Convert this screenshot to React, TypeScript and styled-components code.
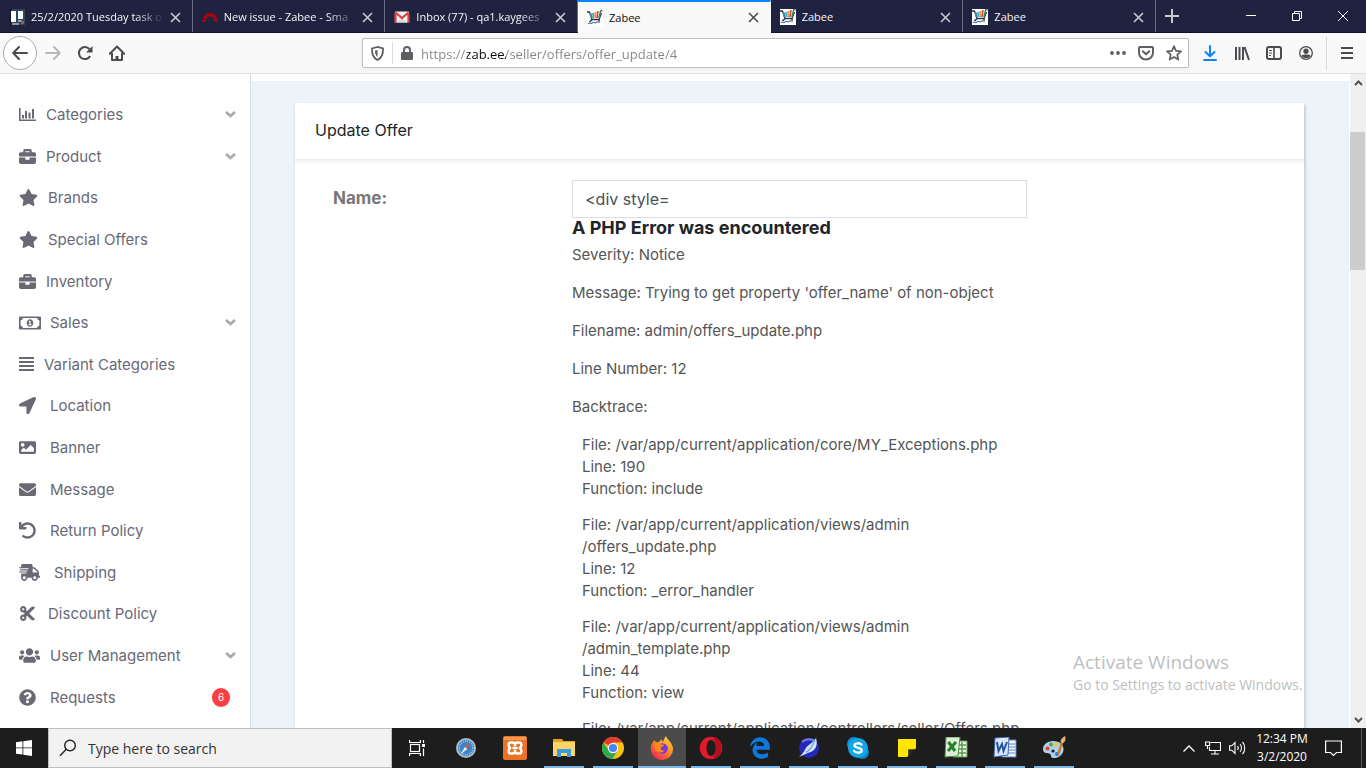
import React from "react";
import styled, { createGlobalStyle, css } from "styled-components";
import {
  FaBriefcase,
  FaCut,
  FaEnvelope,
  FaImage,
  FaLocationArrow,
  FaQuestionCircle,
  FaRegMoneyBillAlt,
  FaShippingFast,
  FaStar,
  FaUndo,
  FaUsers,
  FaEdgeLegacy,
} from "react-icons/fa";

const chromeFont = `"Open Sans", "Noto Sans", sans-serif`;
const pageFont = `Inter, "Open Sans", sans-serif`;

const GlobalStyle = createGlobalStyle`
  * { box-sizing: border-box; }
  body { margin: 0; background: #fff; overflow: hidden; }
  button, input { font: inherit; color: inherit; margin: 0; }
  button { border: 0; padding: 0; background: none; cursor: pointer; }
  a { color: inherit; text-decoration: none; }
  svg { display: block; flex: none; }
`;

const Screen = styled.div`
  display: flex;
  flex-direction: column;
  height: 100vh;
  overflow: hidden;
  font-family: ${chromeFont};
`;

/* ---------- browser chrome ---------- */

const TabStrip = styled.header`
  display: flex;
  flex: none;
  height: 33px;
  background: #20233f;
  border-bottom: 1px solid #10122a;
  color: #f4f4f8;
`;

const Tabs = styled.div`
  display: flex;
  flex: 1;
  max-width: 1156px;
  min-width: 0;
`;

const Tab = styled.div<{ $active?: boolean }>`
  display: flex;
  flex: 1 1 0;
  min-width: 0;
  align-items: center;
  gap: 6px;
  padding: 2px 11px 0 9px;
  font-size: 11px;
  border-right: 1px solid #6b6d80;
  ${(p) =>
    p.$active &&
    css`
      height: 33px;
      padding-top: 0;
      color: #0c0c0d;
      background: #f9f9fa;
      border-top: 2px solid #0a84ff;
      border-right-color: #f9f9fa;
    `}
`;

const TabTitle = styled.span<{ $fade?: boolean }>`
  flex: 1;
  min-width: 0;
  overflow: hidden;
  white-space: nowrap;
  line-height: 18px;
  ${(p) => p.$fade && `mask-image: linear-gradient(to right, #000 78%, transparent);`}
`;

const IconButton = styled.button<{ $w: number }>`
  display: flex;
  flex: none;
  align-items: center;
  justify-content: center;
  width: ${(p) => p.$w}px;
  height: 100%;
`;

const WindowButtons = styled.div`
  display: flex;
  margin-left: auto;
`;

const Toolbar = styled.div`
  display: flex;
  flex: none;
  align-items: center;
  height: 41px;
  padding: 0 0 0 3px;
  background: #f9f9fa;
  border-bottom: 1px solid #e0e0e1;
  color: #4a4a4f;
`;

const BackButton = styled.button`
  display: grid;
  place-items: center;
  width: 34px;
  height: 34px;
  border: 1px solid #aaaaab;
  border-radius: 50%;
  background: #fff;
`;

const UrlBar = styled.div`
  display: flex;
  flex: 1;
  align-items: center;
  height: 30px;
  min-width: 0;
  margin: 0 5px 0 229px;
  padding: 0 4px 0 8px;
  gap: 8px;
  border: 1px solid #bebebf;
  border-radius: 2px;
  background: #fff;
  box-shadow: 0 1px 4px rgba(0, 0, 0, 0.06);
  color: #5f5f63;
`;

const UrlInput = styled.input`
  flex: 1;
  min-width: 0;
  height: 24px;
  padding: 2px 0 0;
  border: 0;
  outline: 0;
  font-size: 13px;
  color: transparent;
  background: linear-gradient(to right, #858588 46px, #0c0c0d 46px, #0c0c0d 85px, #858588 85px);
  background-clip: text;
  -webkit-background-clip: text;
`;

const Rule = styled.span<{ $h: number; $color: string }>`
  flex: none;
  width: 1px;
  height: ${(p) => p.$h}px;
  background: ${(p) => p.$color};
`;

const ToolbarEnd = styled.div`
  display: flex;
  align-items: center;
  height: 100%;
  margin-left: 4px;
`;

/* ---------- web page ---------- */

const Viewport = styled.div`
  position: relative;
  display: flex;
  flex: 1;
  min-height: 0;
  overflow: hidden;
  background: #fff;
  font-family: ${pageFont};
`;

const Sidebar = styled.nav`
  flex: none;
  width: 251px;
  border-right: 1px solid #d9dce0;
  color: #686975;
  font-size: 15px;
`;

const MenuList = styled.ul`
  display: flex;
  flex-direction: column;
  height: 100%;
  margin: 0;
  padding: 20px 0 10px;
  list-style: none;
`;

const MenuItem = styled.li`
  flex: 1;
  min-height: 0;
`;

const MenuLink = styled.a<{ $gap: number }>`
  display: flex;
  align-items: center;
  height: 100%;
  padding: 0 14px 0 19px;
  gap: ${(p) => p.$gap}px;
  white-space: nowrap;
`;

const Chevron = styled.span`
  margin-left: auto;
  color: #a9abb0;
`;

const Badge = styled.span`
  display: grid;
  place-items: center;
  width: 18px;
  height: 19px;
  margin-left: auto;
  margin-right: 6px;
  border-radius: 10px;
  background: #fb3f42;
  color: #fff;
  font-size: 10px;
`;

const Main = styled.main`
  flex: 1;
  min-width: 0;
  margin-right: 1px;
  padding: 22px 45px 0 44px;
  border-top: 7px solid #fff;
  background: #ecf4f8;
`;

const Card = styled.section`
  min-height: 100%;
  background: #fff;
  box-shadow: 1px 2px 3px rgba(60, 80, 100, 0.3);
`;

const CardHeader = styled.h1`
  margin: 0;
  padding: 15px 20px 17px;
  border-bottom: 1px solid #ececec;
  box-shadow: 0 2px 3px rgba(0, 0, 0, 0.06);
  color: #212529;
  font-size: 16px;
  font-weight: 400;
  line-height: 24px;
`;

const FormRow = styled.div`
  display: grid;
  grid-template-columns: 239px minmax(0, 455px);
  padding: 20px 38px 0;
`;

const FieldLabel = styled.label`
  color: #777;
  font-size: 17px;
  font-weight: 700;
  line-height: 36px;
`;

const TextField = styled.input`
  display: block;
  width: 100%;
  height: 38px;
  padding: 0 12px;
  border: 1px solid #dcdde3;
  outline: 0;
  background: #fff;
  color: #495057;
  font-size: 16px;
`;

const ErrorTitle = styled.h4`
  margin: 0 0 6px;
  color: #212529;
  font-size: 18px;
  font-weight: 700;
  line-height: 20px;
`;

const Line = styled.p`
  margin: 0 0 16px;
  color: #555;
  font-size: 15px;
  line-height: 22px;
  white-space: nowrap;
`;

const TraceEntry = styled(Line)`
  margin: 0 0 14px 10px;
`;

const Scrollbar = styled.div`
  display: flex;
  flex: none;
  flex-direction: column;
  align-items: center;
  width: 16px;
  padding: 6px 0 5px;
  background: #f0f0f0;
  color: #505050;
`;

const Thumb = styled.div`
  width: 100%;
  height: 138px;
  margin: 46px 0 auto;
  border-right: 1px solid #f0f0f0;
  background: #cdcdcd;
`;

const Watermark = styled.div`
  position: absolute;
  right: 57px;
  bottom: 33px;
  width: 236px;
  color: #bdbfc0;
  font-family: ${chromeFont};
  font-size: 14px;
  line-height: 20px;
  white-space: nowrap;
`;

const WatermarkTitle = styled.div`
  font-size: 19px;
  line-height: 26px;
`;

/* ---------- task bar ---------- */

const Taskbar = styled.footer`
  display: flex;
  flex: none;
  height: 40px;
  background: #1d1d1d;
  color: #fff;
`;

const SearchBox = styled.label`
  display: flex;
  flex: none;
  align-items: center;
  gap: 11px;
  width: 344px;
  padding: 0 10px;
  border: 1px solid #bfbfbf;
  background: #f2f2f2;
  color: #222;
`;

const SearchInput = styled.input`
  flex: 1;
  min-width: 0;
  padding: 0;
  border: 0;
  outline: 0;
  background: none;
  font-size: 14px;
  &::placeholder {
    color: #333;
    opacity: 1;
  }
`;

const Apps = styled.div`
  display: flex;
  flex: none;
  gap: 1px;
  padding-left: 1px;
`;

const AppButton = styled.button<{ $running?: boolean; $active?: boolean }>`
  display: grid;
  place-items: center;
  width: 48px;
  background: ${(p) => (p.$active ? "#4b4b4b" : "transparent")};
  ${(p) =>
    p.$running &&
    css`
      background-image: linear-gradient(#76b9ed, #76b9ed);
      background-repeat: no-repeat;
      background-position: center bottom;
      background-size: ${p.$active ? "48px" : "40px"} 2px;
    `}
`;

const Tray = styled.div`
  display: flex;
  align-items: center;
  margin-left: auto;
  padding-right: 4px;
`;

const Clock = styled.time`
  width: 66px;
  font-size: 12px;
  line-height: 18px;
  text-align: center;
`;

const TrayEnd = styled.div`
  display: flex;
  gap: 10px;
  height: 100%;
`;

/* ---------- drawings ---------- */

const CloseGlyph = ({ color = "#c9c9d2" }: { color?: string }) => (
  <svg width="11" height="11" viewBox="0 0 11 11" stroke={color} strokeWidth="1.6">
    <path d="M1 1l9 9M10 1l-9 9" />
  </svg>
);

const ZabeeIcon = () => (
  <svg width="16" height="16" viewBox="0 0 16 16" fill="none">
    <rect width="16" height="16" fill="#fff" />
    <path d="M0 2h2.500l2.500 7.500h7L14.500 3" stroke="#26384f" strokeWidth="1.300" />
    <path d="M3.500 3.500L4.800 8" stroke="#4a7fc0" strokeWidth="2" />
    <path d="M6 3l.4 5" stroke="#2cb5c9" strokeWidth="1.800" />
    <path d="M8.200 2v6" stroke="#f0a02c" strokeWidth="1.800" />
    <path d="M10.800 1l-.7 7" stroke="#e8453c" strokeWidth="1.800" />
    <path d="M15.500.8h-1.800l-1.800 7" stroke="#3c8b6c" strokeWidth="1.500" />
    <path d="M5 9.500L2.500 12M11.500 9.500l1 2" stroke="#26384f" strokeWidth="1.500" />
    <path d="M1 14c2-2.500 2 1 4-1s2 1 4-.5 2 .5 4-.5" stroke="#5d7ca4" strokeWidth="1.200" />
  </svg>
);

const BoardIcon = () => (
  <svg width="16" height="16" viewBox="0 0 16 16">
    <rect width="16" height="16" fill="#33475a" />
    <path d="M0 0h3v16H0z" fill="#15202c" />
    <rect x="2" y="2" width="5" height="11" fill="#fff" />
    <rect x="9" y="2" width="5" height="8" fill="#f5f8fa" />
    <path d="M9 11h4v2H9z" fill="#8ca2b6" />
    <path d="M12 12h3v3h-3z" fill="#a5583f" />
    <path d="M3 14h7v2H3z" fill="#8a97a4" />
  </svg>
);

const RedmineIcon = () => (
  <svg width="16" height="16" viewBox="0 0 16 16" fill="none">
    <path d="M2 13A6 7.500 0 0 1 14 13" stroke="#b3020c" strokeWidth="3.500" strokeDasharray="2.800 .7" />
  </svg>
);

const GmailIcon = () => (
  <svg width="16" height="16" viewBox="0 0 16 16">
    <rect x="1" y="2.500" width="14" height="11" rx="1" fill="#f2f2f2" />
    <path d="M3 13.500l5-5 5 5z" fill="#dcdcdc" />
    <path d="M1.500 4v9.500M14.500 4v9.500M1.500 3.500L8 9l6.500-5.500" fill="none" stroke="#d9453a" strokeWidth="2.200" />
  </svg>
);

const BarsIcon = () => (
  <svg width="17" height="13" viewBox="0 0 17 13" fill="none" stroke="currentColor">
    <path d="M.8 0v12.200H17" strokeWidth="1.600" />
    <path d="M4 7v3.500M7 3v7.500M10.500 4.500v6M14 1v9.500" strokeWidth="2" />
  </svg>
);

const LinesIcon = () => (
  <svg width="15" height="14" viewBox="0 0 15 14" fill="none" stroke="currentColor" strokeWidth="2">
    <path d="M0 1h15M0 5h15M0 9h15M0 13h15" />
  </svg>
);

const DownGlyph = () => (
  <svg width="11" height="7" viewBox="0 0 11 7" fill="none" stroke="currentColor" strokeWidth="2.800">
    <path d="M1 1l4.500 4L10 1" />
  </svg>
);

const ScrollGlyph = ({ up }: { up?: boolean }) => (
  <svg width="9" height="6" viewBox="0 0 9 6" fill="none" stroke="currentColor" strokeWidth="2">
    <path d={up ? "M1 5l3.500-3.500L8 5" : "M1 1l3.500 3.500L8 1"} />
  </svg>
);

const stroke = { fill: "none", stroke: "currentColor", strokeWidth: 2 } as const;

const BackIcon = () => (
  <svg width="16" height="16" viewBox="0 0 16 16" {...stroke} strokeLinecap="round" strokeLinejoin="round">
    <path d="M15 8H1.500M7 2L1.200 8 7 14" />
  </svg>
);
const ForwardIcon = () => (
  <svg width="16" height="16" viewBox="0 0 16 16" {...stroke} stroke="#b9b9bb" strokeLinecap="round" strokeLinejoin="round">
    <path d="M1 8h13.500M9 2l5.800 6L9 14" />
  </svg>
);
const ReloadIcon = () => (
  <svg width="16" height="16" viewBox="0 0 16 16" {...stroke}>
    <path d="M13.200 11A6 6 0 1 1 12.500 4.200" />
    <path d="M15.500 1v6.500H9z" fill="currentColor" stroke="none" />
  </svg>
);
const HomeIcon = () => (
  <svg width="16" height="16" viewBox="0 0 16 16" {...stroke} strokeLinejoin="round">
    <path d="M.8 8.800L8 1.500l7.200 7.300" strokeLinecap="round" />
    <path d="M3 8v7h10V8" />
    <path d="M8 15v-4" strokeWidth="3" />
  </svg>
);
const ShieldIcon = () => (
  <svg width="13" height="15" viewBox="0 0 13 15" {...stroke}>
    <path d="M1 2.500L6.500 1 12 2.500c0 5-.5 9-5.500 11.500C1.500 11.500 1 7.500 1 2.500z" strokeWidth="1.800" />
    <path d="M6.500 4v7C4.500 9.500 4 7.500 4 4.500z" fill="currentColor" stroke="none" />
  </svg>
);
const LockIcon = () => (
  <svg width="12" height="14" viewBox="0 0 12 14" {...stroke}>
    <path d="M3 7V4a3 3 0 0 1 6 0v3" />
    <rect y="6" width="12" height="8" rx="1" fill="currentColor" stroke="none" />
  </svg>
);
const DotsIcon = () => (
  <svg width="16" height="16" viewBox="0 0 16 16" fill="currentColor">
    <circle cx="2" cy="8" r="1.900" />
    <circle cx="8" cy="8" r="1.900" />
    <circle cx="14" cy="8" r="1.900" />
  </svg>
);
const PocketIcon = () => (
  <svg width="16" height="16" viewBox="0 0 16 16" {...stroke} strokeLinejoin="round">
    <path d="M2 2h12a1 1 0 0 1 1 1v4.500a7 7 0 0 1-14 0V3a1 1 0 0 1 1-1z" />
    <path d="M4.800 6.200L8 9.300l3.200-3.100" strokeLinecap="round" />
  </svg>
);
const StarIcon = () => (
  <svg width="16" height="16" viewBox="0 0 16 16" {...stroke} strokeWidth="1.700" strokeLinejoin="round">
    <path d="M8 1.200l2 4.600 5 .5-3.700 3.300 1.100 5L8 12l-4.400 2.600 1.100-5L1 6.300l5-.5z" />
  </svg>
);
const DownloadIcon = () => (
  <svg width="14" height="16" viewBox="0 0 14 16" {...stroke} stroke="#0a84ff" strokeLinecap="round" strokeLinejoin="round">
    <path d="M7 1v10M2.500 7L7 11.300 11.500 7M1 15h12" />
  </svg>
);
const LibraryIcon = () => (
  <svg width="16" height="16" viewBox="0 0 16 16" {...stroke}>
    <path d="M2 2v13M5.500 2v13M9 2v13M10.500 2l4.500 13" />
  </svg>
);
const SidebarIcon = () => (
  <svg width="16" height="14" viewBox="0 0 16 14" {...stroke}>
    <rect x="1" y="1" width="14" height="12" rx="2" />
    <path d="M8 1v12" strokeWidth="1.600" />
    <path d="M3 4.500h3M3 7h3M3 9.500h2" strokeWidth="1" />
  </svg>
);
const AccountIcon = () => (
  <svg width="14" height="14" viewBox="0 0 14 14" {...stroke}>
    <circle cx="7" cy="7" r="6.300" strokeWidth="1.300" />
    <circle cx="7" cy="5.200" r="2.600" fill="currentColor" stroke="none" />
    <path d="M2.500 9.500C4 8.300 10 8.300 11.500 9.500 10.500 11.600 9 12 7 12s-3.500-.4-4.500-2.500z" fill="currentColor" stroke="none" />
  </svg>
);
const MenuIcon = () => (
  <svg width="12" height="12" viewBox="0 0 12 12" {...stroke}>
    <path d="M0 1h12M0 6h12M0 11h12" />
  </svg>
);

const WindowsLogo = () => (
  <svg width="16" height="16" viewBox="0 0 16 16" fill="#fff">
    <path d="M0 2.300L6.500 1.300v6.200H0zM7.300 1.200L16 0v7.500H7.300zM0 8.300h6.500v6.300L0 13.700zM7.300 8.300H16V16l-8.700-1.200z" />
  </svg>
);
const SearchGlyph = () => (
  <svg width="18" height="18" viewBox="0 0 18 18" fill="none" stroke="#222" strokeWidth="1.400">
    <circle cx="11" cy="6.500" r="5.300" />
    <path d="M7.200 10.300L1 16.800" />
  </svg>
);
const TaskViewIcon = () => (
  <svg width="17" height="16" viewBox="0 0 17 16" fill="none" stroke="#fff" strokeWidth="1.200">
    <rect x="1.500" y="4.500" width="9" height="7" />
    <path d="M.6 0v2.500h10.800V0M.6 16v-2.500h10.800V16M14.500 0v3M14.500 8.500V16" />
    <path d="M13 4h3v3h-3z" fill="#fff" stroke="none" />
  </svg>
);
const SafariIcon = () => (
  <svg width="22" height="22" viewBox="0 0 22 22">
    <circle cx="11" cy="11" r="10" fill="#b9bdc2" />
    <circle cx="11" cy="11" r="8.200" fill="#3c86c8" />
    <circle cx="11" cy="11" r="6.800" fill="none" stroke="#a9d3f2" strokeWidth="1.400" strokeDasharray="1 1.200" />
    <path d="M16 5l-3.800 7-2.400-2z" fill="#e9502e" />
    <path d="M6 17l3.800-7 2.400 2z" fill="#fff" />
  </svg>
);
const XamppIcon = () => (
  <svg width="24" height="24" viewBox="0 0 24 24">
    <rect width="24" height="24" rx="2" fill="#ea7423" />
    <path d="M1 1h22v3H1z" fill="#f39b55" />
    <path
      d="M8 6.500h1.500c1.500 0 2.500 1 2.500 2.500 0-1.500 1-2.500 2.500-2.500H16c3 0 3 4 .8 5.500 2.200 1.500 2.200 5.500-.8 5.500h-1.500c-1.500 0-2.500-1-2.500-2.500 0 1.500-1 2.500-2.500 2.500H8c-3 0-3-4-.8-5.500C5 10.500 5 6.500 8 6.500zM9.500 12h5"
      fill="none"
      stroke="#fff"
      strokeWidth="2.600"
      strokeLinejoin="round"
    />
  </svg>
);
const ExplorerIcon = () => (
  <svg width="22" height="20" viewBox="0 0 22 20">
    <path d="M0 1h9l1.500 2H22v15H0z" fill="#e3a41f" />
    <path d="M0 4h22v14H0z" fill="#fdd667" />
    <path d="M4 11h14v8h-4v-4H8v4H4z" fill="#3c9be0" />
  </svg>
);
const ChromeIcon = () => (
  <svg width="22" height="22" viewBox="0 0 22 22">
    <circle cx="11" cy="11" r="11" fill="#fbc116" />
    <path d="M11 11L1.500 5.500A11 11 0 0 1 20.500 5.500H11z" fill="#e33b2e" />
    <path d="M1.500 5.500A11 11 0 0 0 10.500 22L15.500 13.500 11 11 6.500 13z" fill="#2da94f" />
    <circle cx="11" cy="11" r="5.200" fill="#fff" />
    <circle cx="11" cy="11" r="4.100" fill="#4688f1" />
  </svg>
);
const FirefoxIcon = () => (
  <svg width="24" height="24" viewBox="0 0 24 24">
    <defs>
      <linearGradient id="fox" x1="1" y1="0" x2="0.300" y2="1">
        <stop offset="0" stopColor="#ffe34a" />
        <stop offset=".45" stopColor="#ff9a1f" />
        <stop offset="1" stopColor="#f5294f" />
      </linearGradient>
    </defs>
    <path d="M2.500 6.500L4.500 4l1.500 2.500 3-.5c1-2 3-2.500 3-2.500l.5 2.500C14 5 14 2 16 0c.5 3 6 6 7 12a11 11 0 0 1-22 2C.5 10.500 1.500 8.500 2.500 6.500z" fill="url(#fox)" />
    <circle cx="12.500" cy="12.500" r="5.300" fill="#7a3bd8" />
    <path d="M5 7c3-1 5 0 6 1.500l3 .3c0 1.700-2.500 2-3 2.700-.8 2 .5 3.500 3.500 3-2 3-8 2.500-9.500-1.500z" fill="#ff8a1c" />
  </svg>
);
const OperaIcon = () => (
  <svg width="24" height="24" viewBox="0 0 24 24">
    <circle cx="12" cy="12" r="11.300" fill="#e3182d" />
    <path d="M15 1.200a11.300 11.300 0 0 1 0 21.600z" fill="#b20f20" />
    <ellipse cx="12" cy="12" rx="4.600" ry="8" fill="#1d1d1d" />
  </svg>
);
const BirdIcon = () => (
  <svg width="22" height="22" viewBox="0 0 22 22">
    <circle cx="11" cy="11" r="10" fill="#2727b8" />
    <path d="M4 5a10 10 0 0 1 14 0" fill="none" stroke="#6d7bee" strokeWidth="2" />
    <path d="M18 1c2 7 0 13-7 14.500L1 20c3-3 5-4.500 6-7.500C9 8 15 6 18 1z" fill="#cfe4fb" />
    <path d="M8 15.500c5-3 7-7 9-13" stroke="#6ca1df" strokeWidth="1.200" fill="none" />
  </svg>
);
const SkypeIcon = () => (
  <svg width="24" height="24" viewBox="0 0 24 24">
    <circle cx="8" cy="8" r="7" fill="#1390d4" />
    <circle cx="16.500" cy="16.500" r="6.500" fill="#0b84cc" />
    <circle cx="12" cy="12" r="10" fill="#11a6e6" />
    <path d="M15.500 8.500c-2-2-7-1.500-7 1 0 3 7.300 1.500 7.300 4.700 0 3-5.800 3-7.800.8" fill="none" stroke="#fff" strokeWidth="2.300" strokeLinecap="round" />
  </svg>
);
const NotesIcon = () => (
  <svg width="18" height="18" viewBox="0 0 18 18">
    <path d="M0 0h18v9H9v9H0z" fill="#ffe500" />
    <path d="M9 18V9h9z" fill="#2a2a1d" />
    <path d="M9 18V9h9l-1 1.200h-6.800V17z" fill="#ffe500" />
  </svg>
);
const ExcelIcon = () => (
  <svg width="24" height="22" viewBox="0 0 24 22">
    <path d="M9 4h14v16H9z" fill="#eaf4e6" stroke="#5b9a4b" />
    <path d="M14 8h8M14 12h8M14 16h8M18 5v15" stroke="#5b9a4b" strokeWidth="1.500" />
    <path d="M2 0h14l-2 19-13 1z" fill="#dfeed8" stroke="#4c933d" />
    <path d="M4.500 5l6.500 9M12 5l-8 9" stroke="#27802b" strokeWidth="3" />
  </svg>
);
const WordIcon = () => (
  <svg width="24" height="22" viewBox="0 0 24 22">
    <path d="M9 3h14v17H9z" fill="#f3f7fd" stroke="#5a80c0" />
    <path d="M15 7h7M15 10h7M15 13h7M15 16h7" stroke="#5a80c0" />
    <path d="M2 1l14-1-1 18-14 2z" fill="#dbe7f8" stroke="#3c67b1" />
    <path d="M4 5l1.500 9L9 7l1.500 7L14 5" fill="none" stroke="#2455a4" strokeWidth="2" />
  </svg>
);
const PaintIcon = () => (
  <svg width="24" height="24" viewBox="0 0 24 24">
    <path d="M11 5c7 0 11 4 10.500 9S16 22.500 11 22c-3-.3-1-4-4-4.500S1 17 1 13s4-8 10-8z" fill="#a9d3ea" />
    <circle cx="5.500" cy="12.500" r="2" fill="#e8402a" />
    <circle cx="9" cy="8.500" r="2" fill="#54a845" />
    <circle cx="14" cy="8.500" r="2" fill="#f5c52c" />
    <circle cx="11" cy="15" r="1.600" fill="#1d1d1d" />
    <circle cx="15" cy="18" r="2" fill="#2c6fc4" />
    <path d="M20.500 5l-4.500 14" stroke="#d9762b" strokeWidth="2.400" />
    <path d="M18.500 6c0-3 2-4.500 4.500-6 1 3 .5 5-1.500 7z" fill="#e0b37b" />
  </svg>
);
const CaretUp = () => (
  <svg width="12" height="7" viewBox="0 0 12 7" fill="none" stroke="#fff" strokeWidth="1.300">
    <path d="M.5 6.500L6 1l5.500 5.500" />
  </svg>
);
const NetworkIcon = () => (
  <svg width="16" height="14" viewBox="0 0 16 14" fill="none" stroke="#fff" strokeWidth="1.100">
    <path d="M5.500 1.500h10v8H4.500v-3.500M10 9.500v3M6 13h8" />
    <path d="M.6 1h4v3.500h-4zM2.500 4.500V8" />
  </svg>
);
const VolumeIcon = () => (
  <svg width="17" height="14" viewBox="0 0 17 14" fill="none" stroke="#fff" strokeWidth="1.100">
    <path d="M.6 4.800h2.200L6 1.500v11L2.800 9.200H.6zM8.500 5c1 1.200 1 2.800 0 4M11 3c2 2.200 2 5.800 0 8M13.500 1c3 3.200 3 8.800 0 12" />
  </svg>
);
const ActionIcon = () => (
  <svg width="17" height="17" viewBox="0 0 17 17" fill="none" stroke="#fff" strokeWidth="1.200">
    <path d="M.6 1h15.800v11.500h-5L8.500 15.500l-3-3H.6z" />
  </svg>
);

/* ---------- data ---------- */

const tabs = [
  { title: "25/2/2020 Tuesday task o", icon: <BoardIcon />, fade: true },
  { title: "New issue - Zabee - Sma", icon: <RedmineIcon />, fade: true },
  { title: "Inbox (77) - qa1.kaygees", icon: <GmailIcon />, fade: true },
  { title: "Zabee", icon: <ZabeeIcon />, active: true },
  { title: "Zabee", icon: <ZabeeIcon /> },
  { title: "Zabee", icon: <ZabeeIcon /> },
];

const menu: { label: string; icon: React.ReactNode; gap: number; open?: boolean; badge?: number }[] = [
  { label: "Categories", icon: <BarsIcon />, gap: 10, open: true },
  { label: "Product", icon: <FaBriefcase size={17} />, gap: 10, open: true },
  { label: "Brands", icon: <FaStar size={19} />, gap: 10 },
  { label: "Special Offers", icon: <FaStar size={19} />, gap: 10 },
  { label: "Inventory", icon: <FaBriefcase size={17} />, gap: 10 },
  { label: "Sales", icon: <FaRegMoneyBillAlt size={22} />, gap: 9, open: true },
  { label: "Variant Categories", icon: <LinesIcon />, gap: 10 },
  { label: "Location", icon: <FaLocationArrow size={17} />, gap: 14 },
  { label: "Banner", icon: <FaImage size={17} />, gap: 14 },
  { label: "Message", icon: <FaEnvelope size={17} />, gap: 14 },
  { label: "Return Policy", icon: <FaUndo size={17} />, gap: 14 },
  { label: "Shipping", icon: <FaShippingFast size={21} />, gap: 14 },
  { label: "Discount Policy", icon: <FaCut size={17} />, gap: 12 },
  { label: "User Management", icon: <FaUsers size={21} />, gap: 10, open: true },
  { label: "Requests", icon: <FaQuestionCircle size={17} />, gap: 14, badge: 6 },
];

const messages = [
  "Severity: Notice",
  "Message: Trying to get property 'offer_name' of non-object",
  "Filename: admin/offers_update.php",
  "Line Number: 12",
  "Backtrace:",
];

const trace = [
  ["File: /var/app/current/application/core/MY_Exceptions.php", "Line: 190", "Function: include"],
  ["File: /var/app/current/application/views/admin", "/offers_update.php", "Line: 12", "Function: _error_handler"],
  ["File: /var/app/current/application/views/admin", "/admin_template.php", "Line: 44", "Function: view"],
  ["File: /var/app/current/application/controllers/seller/Offers.php"],
];

const apps: { name: string; icon: React.ReactNode; running?: boolean; active?: boolean }[] = [
  { name: "Task view", icon: <TaskViewIcon /> },
  { name: "Safari", icon: <SafariIcon /> },
  { name: "XAMPP", icon: <XamppIcon /> },
  { name: "File Explorer", icon: <ExplorerIcon />, running: true },
  { name: "Chrome", icon: <ChromeIcon />, running: true },
  { name: "Firefox", icon: <FirefoxIcon />, running: true, active: true },
  { name: "Opera", icon: <OperaIcon />, running: true },
  { name: "Edge", icon: <FaEdgeLegacy size={22} color="#0a7bdc" />, running: true },
  { name: "SeaMonkey", icon: <BirdIcon />, running: true },
  { name: "Skype", icon: <SkypeIcon />, running: true },
  { name: "Sticky Notes", icon: <NotesIcon />, running: true },
  { name: "Excel", icon: <ExcelIcon />, running: true },
  { name: "Word", icon: <WordIcon />, running: true },
  { name: "Paint", icon: <PaintIcon />, running: true },
];

export default function App() {
  return (
    <Screen>
      <GlobalStyle />
      <TabStrip>
        <Tabs>
          {tabs.map((t, i) => (
            <Tab key={i} $active={t.active}>
              {t.icon}
              <TabTitle $fade={t.fade}>{t.title}</TabTitle>
              <IconButton $w={11} aria-label="Close tab">
                <CloseGlyph color={t.active ? "#4a4a4f" : undefined} />
              </IconButton>
            </Tab>
          ))}
        </Tabs>
        <IconButton $w={32} aria-label="New tab">
          <svg width="14" height="14" viewBox="0 0 14 14" stroke="#c9c9d2" strokeWidth="2">
            <path d="M7 0v14M0 7h14" />
          </svg>
        </IconButton>
        <WindowButtons>
          <IconButton $w={46} aria-label="Minimize">
            <svg width="10" height="10" viewBox="0 0 10 10" stroke="#fff">
              <path d="M0 4.500h10" />
            </svg>
          </IconButton>
          <IconButton $w={46} aria-label="Restore">
            <svg width="10" height="10" viewBox="0 0 10 10" fill="none" stroke="#fff">
              <path d="M.5 2.500h7v7h-7zM2.500 2.500v-2h7v7h-2" />
            </svg>
          </IconButton>
          <IconButton $w={46} aria-label="Close">
            <svg width="10" height="10" viewBox="0 0 10 10" stroke="#fff">
              <path d="M0 0l10 10M10 0L0 10" />
            </svg>
          </IconButton>
        </WindowButtons>
      </TabStrip>

      <Toolbar>
        <BackButton aria-label="Back">
          <BackIcon />
        </BackButton>
        <IconButton $w={32} aria-label="Forward">
          <ForwardIcon />
        </IconButton>
        <IconButton $w={32} aria-label="Reload">
          <ReloadIcon />
        </IconButton>
        <IconButton $w={32} aria-label="Home">
          <HomeIcon />
        </IconButton>
        <UrlBar>
          <ShieldIcon />
          <Rule $h={22} $color="#dcdcdc" />
          <LockIcon />
          <UrlInput aria-label="Address" defaultValue="https://zab.ee/seller/offers/offer_update/4" spellCheck={false} />
          <IconButton $w={20} aria-label="Page actions">
            <DotsIcon />
          </IconButton>
          <IconButton $w={20} aria-label="Save to Pocket">
            <PocketIcon />
          </IconButton>
          <IconButton $w={20} aria-label="Bookmark">
            <StarIcon />
          </IconButton>
        </UrlBar>
        <IconButton $w={32} aria-label="Downloads">
          <DownloadIcon />
        </IconButton>
        <IconButton $w={32} aria-label="Library">
          <LibraryIcon />
        </IconButton>
        <IconButton $w={32} aria-label="Sidebars">
          <SidebarIcon />
        </IconButton>
        <IconButton $w={32} aria-label="Account">
          <AccountIcon />
        </IconButton>
        <ToolbarEnd>
          <Rule $h={33} $color="#d7d7d9" />
          <IconButton $w={39} aria-label="Menu">
            <MenuIcon />
          </IconButton>
        </ToolbarEnd>
      </Toolbar>

      <Viewport>
        <Sidebar>
          <MenuList>
            {menu.map((m) => (
              <MenuItem key={m.label}>
                <MenuLink href="#" $gap={m.gap}>
                  {m.icon}
                  <span>{m.label}</span>
                  {m.open && (
                    <Chevron>
                      <DownGlyph />
                    </Chevron>
                  )}
                  {m.badge && <Badge>{m.badge}</Badge>}
                </MenuLink>
              </MenuItem>
            ))}
          </MenuList>
        </Sidebar>
        <Main>
          <Card>
            <CardHeader>Update Offer</CardHeader>
            <FormRow>
              <FieldLabel htmlFor="offer-name">Name:</FieldLabel>
              <div>
                <TextField id="offer-name" defaultValue="<div style=" />
                <ErrorTitle>A PHP Error was encountered</ErrorTitle>
                {messages.map((m) => (
                  <Line key={m}>{m}</Line>
                ))}
                {trace.map((entry, i) => (
                  <TraceEntry key={i}>
                    {entry.map((row, j) => (
                      <React.Fragment key={j}>
                        {j > 0 && <br />}
                        {row}
                      </React.Fragment>
                    ))}
                  </TraceEntry>
                ))}
              </div>
            </FormRow>
          </Card>
        </Main>
        <Scrollbar>
          <ScrollGlyph up />
          <Thumb />
          <ScrollGlyph />
        </Scrollbar>
        <Watermark>
          <WatermarkTitle>Activate Windows</WatermarkTitle>
          Go to Settings to activate Windows.
        </Watermark>
      </Viewport>

      <Taskbar>
        <IconButton $w={48} aria-label="Start">
          <WindowsLogo />
        </IconButton>
        <SearchBox>
          <SearchGlyph />
          <SearchInput aria-label="Search" placeholder="Type here to search" />
        </SearchBox>
        <Apps>
          {apps.map((a) => (
            <AppButton key={a.name} aria-label={a.name} $running={a.running} $active={a.active}>
              {a.icon}
            </AppButton>
          ))}
        </Apps>
        <Tray>
          <IconButton $w={24} aria-label="Show hidden icons">
            <CaretUp />
          </IconButton>
          <IconButton $w={24} aria-label="Network">
            <NetworkIcon />
          </IconButton>
          <IconButton $w={24} aria-label="Volume">
            <VolumeIcon />
          </IconButton>
          <Clock>
            12:34 PM
            <br />
            3/2/2020
          </Clock>
          <TrayEnd>
            <IconButton $w={36} aria-label="Notifications">
              <ActionIcon />
            </IconButton>
            <Rule $h={40} $color="#5a5a5a" />
          </TrayEnd>
        </Tray>
      </Taskbar>
    </Screen>
  );
}
